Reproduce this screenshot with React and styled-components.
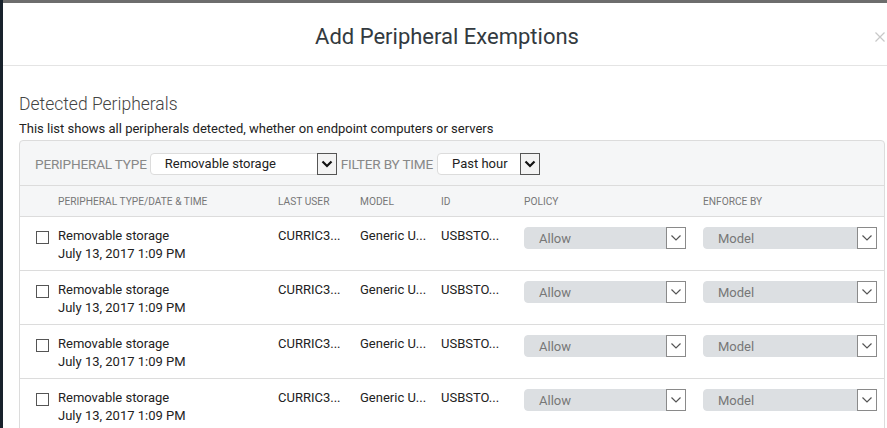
import React from "react";
import styled, { createGlobalStyle } from "styled-components";

const Global = createGlobalStyle`
  html, body { margin: 0; padding: 0; overflow: hidden; }
  body { background: #18222c; font-family: Roboto, "Liberation Sans", sans-serif; }
  * { box-sizing: border-box; }
`;

const Page = styled.div`
  width: 887px;
  height: 428px;
  overflow: hidden;
  display: flex;
  flex-direction: column;
`;

const TopStrip = styled.div`
  height: 3px;
  margin-left: 3px;
  background: #6d6d6d;
  flex: none;
`;

const Modal = styled.div`
  margin-left: 3px;
  width: 888px;
  flex: 1;
  background: #fff;
  display: flex;
  flex-direction: column;
`;

const Header = styled.div`
  height: 63px;
  padding-top: 5px;
  border-bottom: 1px solid #e4e4e4;
  display: flex;
  align-items: center;
  justify-content: center;
  position: relative;
`;

const Title = styled.h1`
  margin: 0;
  font-family: Roboto, sans-serif;
  font-weight: 400;
  font-size: 22px;
  color: #333a40;
`;

const Close = styled.span`
  position: absolute;
  right: 6px;
  top: 29px;
  width: 10px;
  height: 10px;
  display: flex;
`;

const Body = styled.div`
  padding: 27px 0 0 16px;
  display: flex;
  flex-direction: column;
`;

const Heading = styled.h2`
  margin: 0;
  font-weight: 300;
  font-size: 17.5px;
  color: #444;
  line-height: 22px;
`;

const Sub = styled.p`
  margin: 6px 0 0;
  font-size: 13px;
  color: #222;
  line-height: 16px;
`;

const Box = styled.div`
  margin-top: 3px;
  width: 866px;
  border: 1px solid #dcdcdc;
  border-radius: 4px 4px 0 0;
  background: #f5f6f7;
`;

const FilterBar = styled.div`
  height: 45px;
  display: flex;
  align-items: center;
  padding-left: 15px;
  padding-top: 1px;
  border-bottom: 1px solid #dcdcdc;
`;

const FilterLabel = styled.span`
  font-size: 13.6px;
  color: #888;
  letter-spacing: -0.2px;
  margin-right: ${(p) => p.$mr || 4}px;
`;

const SelectWrap = styled.div`
  width: ${(p) => p.$w}px;
  height: 22px;
  border-radius: 4px;
  display: flex;
  align-items: center;
  justify-content: space-between;
  background: ${(p) => (p.$disabled ? "#dcdfe2" : "#fff")};
  border: 1px solid ${(p) => (p.$disabled ? "#dcdfe2" : "#dcdcdc")};
  margin-right: ${(p) => p.$mr || 0}px;
`;

const SelectText = styled.span`
  padding-left: 14px;
  font-size: 13px;
  color: ${(p) => (p.$disabled ? "#777" : "#222")};
`;

const ArrowBox = styled.span`
  width: 20px;
  height: 22px;
  margin-right: -1px;
  border: 1px solid ${(p) => (p.$disabled ? "#8a8a8a" : "#555")};
  background: ${(p) => (p.$disabled ? "#fff" : "#f3f3f3")};
  display: flex;
  align-items: center;
  justify-content: center;
`;

const Grid = styled.div`
  display: grid;
  grid-template-columns: 38px 220px 82px 81px 83px 179px 1fr;
  align-items: ${(p) => (p.$head ? "center" : "start")};
  height: ${(p) => (p.$head ? 31 : 54)}px;
  padding-top: ${(p) => (p.$head ? 0 : 10)}px;
  background: ${(p) => (p.$head ? "#f5f6f7" : "#fff")};
  border-bottom: 1px solid #dcdcdc;
`;

const HeadCell = styled.span`
  font-size: 10.2px;
  color: #777;
  text-transform: uppercase;
`;

const Cell = styled.span`
  font-size: 13px;
  color: #222;
  line-height: 18px;
`;

const Check = styled.span`
  margin: 4px 0 0 16px;
  width: 13px;
  height: 13px;
  border: 1px solid #555;
  background: #fff;
`;

const Chevron = ({ disabled }) => (
  <svg width="12" height="8" viewBox="0 0 12 8">
    <path
      d="M1.5 1.5 L6 6 L10.5 1.5"
      fill="none"
      stroke={disabled ? "#555" : "#111"}
      strokeWidth={disabled ? 1.2 : 2.2}
    />
  </svg>
);

const Select = ({ w, text, disabled, mr }) => (
  <SelectWrap $w={w} $disabled={disabled} $mr={mr}>
    <SelectText $disabled={disabled}>{text}</SelectText>
    <ArrowBox $disabled={disabled}>
      <Chevron disabled={disabled} />
    </ArrowBox>
  </SelectWrap>
);

const rows = [0, 1, 2, 3];

export default function App() {
  return (
    <Page>
      <Global />
      <TopStrip />
      <Modal>
        <Header>
          <Title>Add Peripheral Exemptions</Title>
          <Close>
            <svg width="10" height="10" viewBox="0 0 10 10">
              <path d="M0.5 0.5 L9.5 9.5 M9.5 0.5 L0.5 9.5" stroke="#c8c8c8" strokeWidth="1.2" />
            </svg>
          </Close>
        </Header>
        <Body>
          <Heading>Detected Peripherals</Heading>
          <Sub>This list shows all peripherals detected, whether on endpoint computers or servers</Sub>
          <Box>
            <FilterBar>
              <FilterLabel $mr={3}>PERIPHERAL TYPE</FilterLabel>
              <Select w={187} text="Removable storage" mr={4} />
              <FilterLabel $mr={4}>FILTER BY TIME</FilterLabel>
              <Select w={103} text="Past hour" />
            </FilterBar>
            <Grid $head>
              <span />
              <HeadCell>Peripheral type/date &amp; time</HeadCell>
              <HeadCell>Last user</HeadCell>
              <HeadCell>Model</HeadCell>
              <HeadCell>ID</HeadCell>
              <HeadCell>Policy</HeadCell>
              <HeadCell>Enforce by</HeadCell>
            </Grid>
            {rows.map((r) => (
              <Grid key={r}>
                <Check />
                <Cell>
                  Removable storage
                  <br />
                  July 13, 2017 1:09 PM
                </Cell>
                <Cell>CURRIC3...</Cell>
                <Cell>Generic U...</Cell>
                <Cell>USBSTO...</Cell>
                <Select w={162} text="Allow" disabled />
                <Select w={174} text="Model" disabled />
              </Grid>
            ))}
          </Box>
        </Body>
      </Modal>
    </Page>
  );
}
